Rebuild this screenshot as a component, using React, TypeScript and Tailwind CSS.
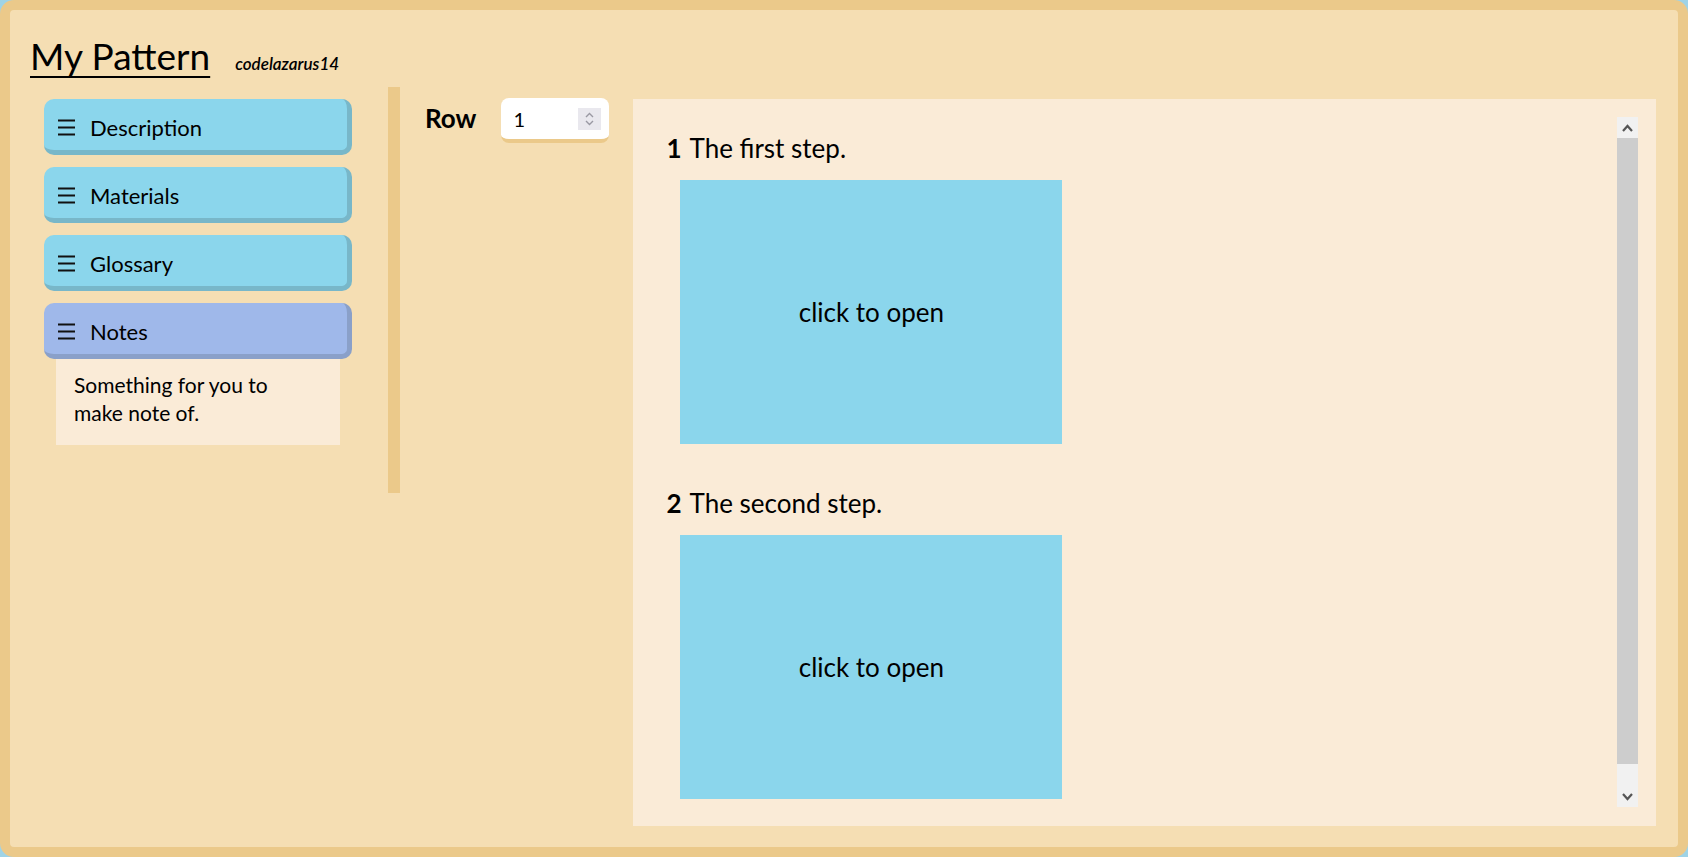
import { ReactNode } from "react";

const steps = [
    { n: 1, text: "The first step." },
    { n: 2, text: "The second step." },
];

function MenuIcon() {
    return (
        <svg width="17" height="17" viewBox="0 0 17 17" className="shrink-0">
            <path d="M0 1.5h17M0 8.5h17M0 15.5h17" stroke="#111" strokeWidth="2" />
        </svg>
    );
}

function SideButton({ label, active, children }: { label: string; active?: boolean; children?: ReactNode }) {
    return (
        <div className="flex flex-col">
            <button
                className={
                    active
                        ? "flex h-[56px] items-center gap-[15px] rounded-[10px] border-r-[5px] border-b-[5px] border-[#8aa0c9] bg-[#9fb8ea] pl-[14px] pt-[6px] text-left text-[22px] text-black"
                        : "flex h-[56px] items-center gap-[15px] rounded-[10px] border-r-[5px] border-b-[5px] border-[#78b7c9] bg-[#8bd6ec] pl-[14px] pt-[6px] text-left text-[22px] text-black"
                }
            >
                <MenuIcon />
                <span>{label}</span>
            </button>
            {children}
        </div>
    );
}

function ScrollBar() {
    return (
        <div className="flex w-[21px] shrink-0 flex-col bg-[#f1f1f1]">
            <div className="flex h-[21px] items-center justify-center">
                <svg width="11" height="8" viewBox="0 0 11 8">
                    <path d="M1 7l4.5-5 4.5 5" stroke="#555" strokeWidth="2.2" fill="none" />
                </svg>
            </div>
            <div className="h-[626px] bg-[#cdcdcd]" />
            <div className="flex-1" />
            <div className="flex h-[21px] items-center justify-center">
                <svg width="11" height="8" viewBox="0 0 11 8">
                    <path d="M1 1l4.5 5 4.5-5" stroke="#555" strokeWidth="2.2" fill="none" />
                </svg>
            </div>
        </div>
    );
}

export default function App() {
    return (
        <div className="h-[857px] w-full overflow-hidden bg-[#9fd3e6] font-['Lato','Open_Sans',sans-serif] text-black">
            <div className="flex h-full flex-col rounded-[14px] border-[10px] border-[#ebc98a] bg-[#f5deb3]">
                {/* header */}
                <div className="flex h-[77px] items-baseline gap-[25px] pl-[20px] pt-[22px]">
                    <h1 className="text-[37px] leading-[48px] underline decoration-[2px] underline-offset-[6px]">My Pattern</h1>
                    <span className="text-[17px] font-semibold italic">codelazarus14</span>
                </div>

                <div className="flex min-h-0 flex-1 pb-[21px]">
                    {/* sidebar */}
                    <div className="ml-[34px] mt-[12px] flex w-[308px] shrink-0 flex-col gap-[12px]">
                        <SideButton label="Description" />
                        <SideButton label="Materials" />
                        <SideButton label="Glossary" />
                        <SideButton label="Notes" active>
                            <div className="mx-[12px] h-[86px] bg-[#faebd7] pl-[18px] pr-[20px] pt-[12px] text-[21px] leading-[28px]">
                                Something for you to make note of.
                            </div>
                        </SideButton>
                    </div>

                    {/* divider */}
                    <div className="ml-[36px] h-[406px] w-[12px] shrink-0 bg-[#ebc98a]" />

                    {/* row picker */}
                    <div className="ml-[25px] mt-[11px] flex h-[45px] shrink-0 items-center gap-[25px]">
                        <span className="-mt-[6px] text-[26px] font-bold leading-none">Row</span>
                        <div className="flex h-[45px] w-[108px] items-center justify-between rounded-[8px] border-b-[4px] border-[#ebc98a] bg-white pl-[12px] pr-[8px]">
                            <span className="text-[20px]">1</span>
                            <div className="flex h-[22px] w-[23px] flex-col items-center justify-center gap-[2px] bg-[#e9e8ee]">
                                <svg width="9" height="6" viewBox="0 0 9 6">
                                    <path d="M1 5l3.5-3.5L8 5" stroke="#9a99a3" strokeWidth="1.4" fill="none" />
                                </svg>
                                <svg width="9" height="6" viewBox="0 0 9 6">
                                    <path d="M1 1l3.5 3.5L8 1" stroke="#9a99a3" strokeWidth="1.4" fill="none" />
                                </svg>
                            </div>
                        </div>
                    </div>

                    {/* steps panel */}
                    <div className="ml-[24px] mr-[22px] mt-[12px] flex min-w-0 flex-1 bg-[#faebd7] pb-[19px] pl-[18px] pr-[18px] pt-[18px]">
                        <div className="min-w-0 flex-1 overflow-hidden">
                            {steps.map((s, i) => (
                                <div key={s.n} className={i === 0 ? "mt-[15px]" : "mt-[43px]"}>
                                    <div className="flex items-baseline gap-[8px] pl-[15px] text-[26px] leading-[32px]">
                                        <span className="font-bold">{s.n}</span>
                                        <span>{s.text}</span>
                                    </div>
                                    <div className="ml-[29px] mt-[16px] flex h-[264px] w-[382px] items-center justify-center bg-[#8bd6ec] text-[26px]">
                                        click to open
                                    </div>
                                </div>
                            ))}
                        </div>
                        <ScrollBar />
                    </div>
                </div>
            </div>
        </div>
    );
}
